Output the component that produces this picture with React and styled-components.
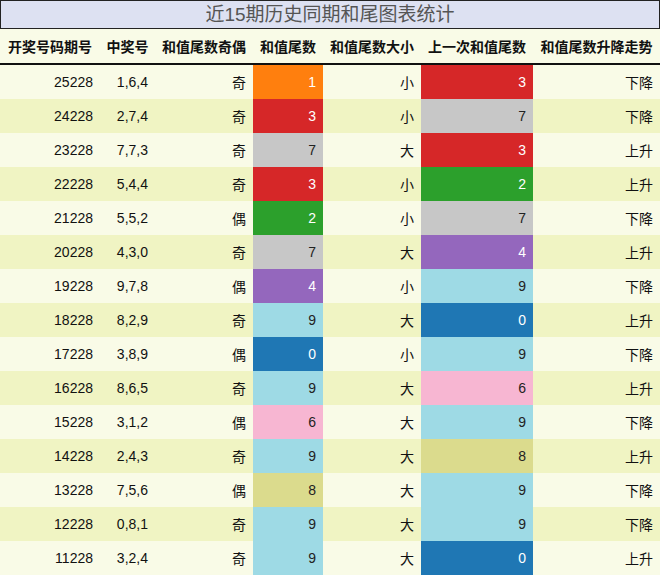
import styled, { createGlobalStyle } from "styled-components";

const GlobalStyle = createGlobalStyle`
  html, body {
    margin: 0;
    padding: 0;
    background: #ffffff;
  }
  body {
    font-family: "Liberation Sans", "Noto Sans CJK SC", sans-serif;
  }
`;

const PALETTE = {
  0: { bg: "#1f77b4", fg: "#ffffff" },
  1: { bg: "#ff7f0e", fg: "#ffffff" },
  2: { bg: "#2ca02c", fg: "#ffffff" },
  3: { bg: "#d62728", fg: "#ffffff" },
  4: { bg: "#9467bd", fg: "#ffffff" },
  6: { bg: "#f7b6d2", fg: "#222222" },
  7: { bg: "#c7c7c7", fg: "#222222" },
  8: { bg: "#dbdb8d", fg: "#222222" },
  9: { bg: "#9edae5", fg: "#222222" },
};

const rows = [
  ["25228", "1,6,4", "奇", 1, "小", 3, "下降"],
  ["24228", "2,7,4", "奇", 3, "小", 7, "下降"],
  ["23228", "7,7,3", "奇", 7, "大", 3, "上升"],
  ["22228", "5,4,4", "奇", 3, "小", 2, "上升"],
  ["21228", "5,5,2", "偶", 2, "小", 7, "下降"],
  ["20228", "4,3,0", "奇", 7, "大", 4, "上升"],
  ["19228", "9,7,8", "偶", 4, "小", 9, "下降"],
  ["18228", "8,2,9", "奇", 9, "大", 0, "上升"],
  ["17228", "3,8,9", "偶", 0, "小", 9, "下降"],
  ["16228", "8,6,5", "奇", 9, "大", 6, "上升"],
  ["15228", "3,1,2", "偶", 6, "大", 9, "下降"],
  ["14228", "2,4,3", "奇", 9, "大", 8, "上升"],
  ["13228", "7,5,6", "偶", 8, "大", 9, "下降"],
  ["12228", "0,8,1", "奇", 9, "大", 9, "下降"],
  ["11228", "3,2,4", "奇", 9, "大", 0, "上升"],
];

const headers = [
  "开奖号码期号",
  "中奖号",
  "和值尾数奇偶",
  "和值尾数",
  "和值尾数大小",
  "上一次和值尾数",
  "和值尾数升降走势",
];
const widths = [100, 55, 98, 70, 98, 112, 127];

const Page = styled.div`
  width: 660px;
  height: 576px;
  overflow: hidden;
  background: #ffffff;
`;

const Title = styled.div`
  box-sizing: border-box;
  height: 29px;
  border: 1px solid #222;
  background: #dde1f2;
  color: #555;
  font-size: 19px;
  line-height: 27px;
  text-align: center;
`;

const Table = styled.table`
  width: 660px;
  border-collapse: collapse;
  table-layout: fixed;
  font-size: 14px;
  color: #111;
`;

const HeadCell = styled.th`
  height: 34px;
  padding: 0;
  background: #f9fbe7;
  border-bottom: 2px solid #111;
  font-weight: 700;
  text-align: center;
  white-space: nowrap;
`;

const Row = styled.tr`
  background: ${(p) => (p.$alt ? "#f0f4c3" : "#f9fbe7")};
`;

const Cell = styled.td`
  height: 34px;
  padding: 0 7px 0 0;
  text-align: right;
  white-space: nowrap;
  background: ${(p) => p.$bg || "transparent"};
  color: ${(p) => p.$fg || "#111"};
`;

const ColorCell = ({ v }) => {
  const c = PALETTE[v];
  return (
    <Cell $bg={c.bg} $fg={c.fg}>
      {v}
    </Cell>
  );
};

export default function App() {
  return (
    <Page>
      <GlobalStyle />
      <Title>近15期历史同期和尾图表统计</Title>
      <Table>
        <colgroup>
          {widths.map((w, i) => (
            <col key={i} style={{ width: w }} />
          ))}
        </colgroup>
        <thead>
          <tr>
            {headers.map((h) => (
              <HeadCell key={h}>{h}</HeadCell>
            ))}
          </tr>
        </thead>
        <tbody>
          {rows.map((r, i) => (
            <Row key={r[0]} $alt={i % 2 === 1}>
              <Cell>{r[0]}</Cell>
              <Cell>{r[1]}</Cell>
              <Cell>{r[2]}</Cell>
              <ColorCell v={r[3]} />
              <Cell>{r[4]}</Cell>
              <ColorCell v={r[5]} />
              <Cell>{r[6]}</Cell>
            </Row>
          ))}
        </tbody>
      </Table>
    </Page>
  );
}
